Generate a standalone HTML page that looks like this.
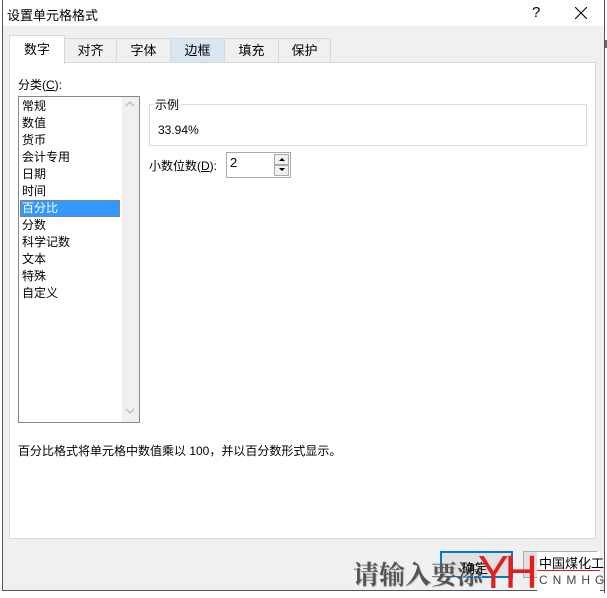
<!DOCTYPE html>
<html><head><meta charset="utf-8"><style>
*{margin:0;padding:0;box-sizing:border-box}
body{width:607px;height:593px;background:#fff;position:relative;overflow:hidden;font-family:"Liberation Sans","Noto Sans CJK SC",sans-serif;font-size:12px;color:#000}
.a{position:absolute}
</style></head><body>
<div class="a" style="left:604px;top:0;width:3px;height:593px;background:#fff;border-left:1px solid #555"></div>
<div class="a" style="left:605px;top:40px;width:2px;height:8px;background:#666"></div>
<div class="a" style="left:2px;top:0;width:602px;height:591px;background:#f0f0f0;border-left:1px solid #555;border-bottom:1px solid #555"></div>
<div class="a" style="left:3px;top:0;width:601px;height:26px;background:#fff"></div>
<div class="a" style="left:7px;top:5px;font-size:13px">设置单元格格式</div>
<div class="a" style="left:532px;top:4px;font-size:15px">?</div>
<svg class="a" style="left:575px;top:7px" width="12" height="12"><path d="M0 0L12 12M12 0L0 12" stroke="#000" stroke-width="1.1"/></svg>
<div class="a" style="left:9px;top:62px;width:587px;height:477px;background:#fff;border:1px solid #d9d9d9"></div>
<div class="a" style="left:64px;top:38px;width:53px;height:25px;background:#f0f0f0;border:1px solid #d9d9d9;text-align:center;line-height:23px;font-size:13px">对齐</div>
<div class="a" style="left:116px;top:38px;width:55px;height:25px;background:#f0f0f0;border:1px solid #d9d9d9;text-align:center;line-height:23px;font-size:13px">字体</div>
<div class="a" style="left:170px;top:38px;width:55px;height:25px;background:#d8e6f2;border:1px solid #d9d9d9;text-align:center;line-height:23px;font-size:13px">边框</div>
<div class="a" style="left:224px;top:38px;width:55px;height:25px;background:#f0f0f0;border:1px solid #d9d9d9;text-align:center;line-height:23px;font-size:13px">填充</div>
<div class="a" style="left:278px;top:38px;width:53px;height:25px;background:#f0f0f0;border:1px solid #d9d9d9;text-align:center;line-height:23px;font-size:13px">保护</div>
<div class="a" style="left:9px;top:35px;width:56px;height:29px;background:#fff;border:1px solid #d9d9d9;border-bottom:none;text-align:center;line-height:27px;font-size:13px">数字</div>
<div class="a" style="left:18px;top:76px;font-size:12px">分类(<u>C</u>):</div>
<div class="a" style="left:18px;top:96px;width:122px;height:327px;border:1px solid #828790;background:#fff"></div>
<div class="a" style="left:122px;top:97px;width:17px;height:325px;background:#f0f0f0"></div>
<svg class="a" style="left:125px;top:101px" width="10" height="6"><path d="M1 5L5 1L9 5" stroke="#bbb" fill="none" stroke-width="1.3"/></svg>
<svg class="a" style="left:125px;top:408px" width="10" height="6"><path d="M1 1L5 5L9 1" stroke="#bbb" fill="none" stroke-width="1.3"/></svg>
<div class="a" style="left:20px;top:200px;width:100px;height:17px;background:#3399ff;border:1px dotted #c07020"></div>
<div class="a" style="left:22px;top:98px;line-height:17px;font-size:12px">常规<br>数值<br>货币<br>会计专用<br>日期<br>时间<br><span style="color:#fff">百分比</span><br>分数<br>科学记数<br>文本<br>特殊<br>自定义</div>
<div class="a" style="left:149px;top:104px;width:438px;height:42px;border:1px solid #dcdcdc"></div>
<div class="a" style="left:153px;top:96px;background:#fff;padding:0 2px;font-size:12px">示例</div>
<div class="a" style="left:158px;top:123px;font-size:12px">33.94%</div>
<div class="a" style="left:149px;top:157px;font-size:12px">小数位数(<u>D</u>):</div>
<div class="a" style="left:226px;top:152px;width:65px;height:26px;border:1px solid #aaa;background:#fff"></div>
<div class="a" style="left:230px;top:155px;font-size:13px">2</div>
<div class="a" style="left:274px;top:154px;width:15px;height:11px;border:1px solid #aaa;background:#f0f0f0"></div>
<div class="a" style="left:274px;top:165px;width:15px;height:11px;border:1px solid #aaa;background:#f0f0f0"></div>
<svg class="a" style="left:278px;top:157px" width="8" height="18"><path d="M1 4L4 1L7 4Z M1 11L4 14L7 11Z" fill="#000"/></svg>
<div class="a" style="left:18px;top:442px;font-size:12px">百分比格式将单元格中数值乘以 100，并以百分数形式显示。</div>
<div class="a" style="left:440px;top:551px;width:73px;height:27px;border:2px solid #0078d7;background:#e1e1e1"></div>
<div class="a" style="left:523px;top:551px;width:74px;height:27px;border:1px solid #adadad;background:#e1e1e1"></div>
<div class="a" style="left:353px;top:555px;font-family:'Noto Serif CJK SC',serif;font-weight:bold;font-size:26px;color:#555;text-shadow:1px 1px 0 #ccc">请输入要添</div>
<div class="a" style="left:462px;top:558px;font-size:13px">确定</div>
<div class="a" style="left:537px;top:552px;width:63px;height:41px;background:#fff"></div>
<div class="a" style="left:539px;top:553px;font-size:13px">中国煤化工</div>
<div class="a" style="left:537px;top:570px;width:63px;height:1px;background:#e02020"></div>
<div class="a" style="left:539px;top:573px;font-size:12px;letter-spacing:5px;color:#444">CNMHG</div>
<div class="a" style="left:478px;top:549px;font-family:'Liberation Sans',sans-serif;font-size:46px;color:#e02020;letter-spacing:-4px;line-height:46px">YH</div>
</body></html>
